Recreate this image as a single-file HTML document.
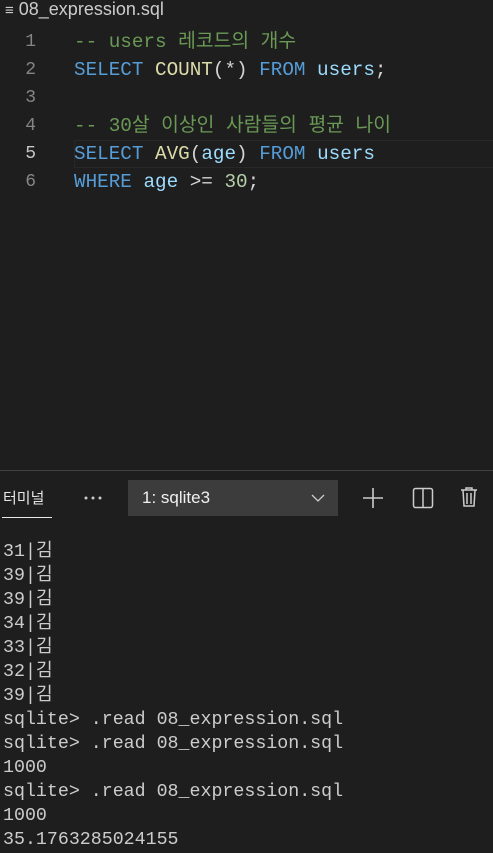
<!DOCTYPE html><html><head><style>
body{margin:0;width:493px;height:853px;background:#1e1e1e;overflow:hidden;position:relative;font-family:"Liberation Mono","Noto Sans CJK KR",monospace;}
.t{position:absolute;white-space:pre;}
.ed{font-size:19.3px;line-height:28px;}
.ln{position:absolute;left:0;width:36px;text-align:right;color:#858585;font-size:18px;font-family:"Liberation Mono",monospace}
.c{color:#6a9955}.k{color:#569cd6}.f{color:#dcdcaa}.v{color:#9cdcfe}.n{color:#b5cea8}.w{color:#d4d4d4}
.term{font-size:18.3px;line-height:24px;color:#cccccc;left:3px;}
</style></head><body>
<div class="t" style="left:5px;top:-1px;font-family:'Liberation Sans',sans-serif;font-size:18px;color:#cccccc;line-height:20px;"><span style="font-size:15px">≡</span> 08_expression.sql</div>
<div style="position:absolute;left:74px;top:140px;width:419px;height:28px;border:1px solid #282828;border-right:none;box-sizing:border-box"></div>
<div class="ln" style="top:28px;line-height:28px">1<br>2<br>3<br>4<br><span style="color:#c6c6c6">5</span><br>6</div>
<div class="t ed" style="left:74px;top:28px"><span class="c">-- users 레코드의 개수</span>
<span class="k">SELECT</span> <span class="f">COUNT</span><span class="w">(*)</span> <span class="k">FROM</span> <span class="v">users</span><span class="w">;</span>

<span class="c">-- 30살 이상인 사람들의 평균 나이</span>
<span class="k">SELECT</span> <span class="f">AVG</span><span class="w">(</span><span class="v">age</span><span class="w">)</span> <span class="k">FROM</span> <span class="v">users</span>
<span class="k">WHERE</span> <span class="v">age</span> <span class="w">&gt;=</span> <span class="n">30</span><span class="w">;</span></div>
<div style="position:absolute;left:0;top:470px;width:493px;height:1px;background:#414141"></div>
<div class="t" style="left:3px;top:487px;font-family:'Liberation Sans','Noto Sans CJK KR',sans-serif;font-size:15px;color:#e7e7e7">터미널</div>
<div style="position:absolute;left:2px;top:517px;width:50px;height:1px;background:#e7e7e7"></div>
<svg style="position:absolute;left:83px;top:495px" width="22" height="6"><circle cx="3" cy="3" r="1.5" fill="#ccc"/><circle cx="10" cy="3" r="1.5" fill="#ccc"/><circle cx="17" cy="3" r="1.5" fill="#ccc"/></svg>
<div style="position:absolute;left:128px;top:480px;width:210px;height:36px;background:#3c3c3c"></div>
<div class="t" style="left:142px;top:488px;font-family:'Liberation Sans',sans-serif;font-size:17px;color:#f0f0f0">1: sqlite3</div>
<svg style="position:absolute;left:310px;top:490px" width="16" height="16"><path d="M2 5l6 6 6-6" stroke="#ccc" fill="none" stroke-width="1.3"/></svg>
<svg style="position:absolute;left:362px;top:487px" width="22" height="22"><path d="M11 1v20M1 11h20" stroke="#ccc" stroke-width="1.6"/></svg>
<svg style="position:absolute;left:412px;top:487px" width="22" height="22"><rect x="1.5" y="1.5" width="19" height="19" rx="2" stroke="#ccc" fill="none" stroke-width="1.5"/><path d="M11 2v18" stroke="#ccc" stroke-width="1.5"/></svg>
<svg style="position:absolute;left:459px;top:486px" width="20" height="22"><path d="M2 4h16M7 4V2h6v2M4 4l1 16h10l1-16M8 7v11M12 7v11" stroke="#ccc" fill="none" stroke-width="1.5"/></svg>
<div class="t term" style="top:540px">31|김
39|김
39|김
34|김
33|김
32|김
39|김
sqlite&gt; .read 08_expression.sql
sqlite&gt; .read 08_expression.sql
1000
sqlite&gt; .read 08_expression.sql
1000
35.1763285024155</div>
</body></html>
